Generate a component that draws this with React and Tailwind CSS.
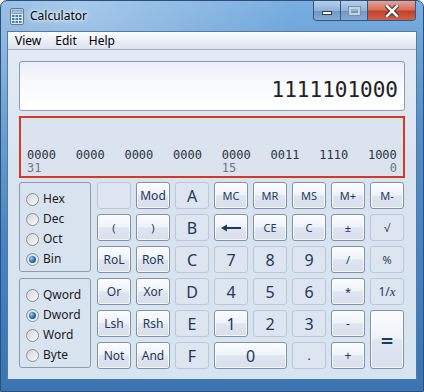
import clsx from "clsx";

const ui = { fontFamily: '"Noto Sans", "Open Sans", Arial, sans-serif' };
const mono = { fontFamily: '"DejaVu Sans Mono", "Liberation Mono", monospace' };

const bits = ["0000", "0000", "0000", "0000", "0000", "0011", "1110", "1000"];

const keys = [
  // row 1
  { t: "", on: false },
  { t: "Mod", on: true, s: "text-[12px]" },
  { t: "A", on: false, s: "text-[16px]" },
  { t: "MC", on: true, s: "text-[11px]" },
  { t: "MR", on: true, s: "text-[11px]" },
  { t: "MS", on: true, s: "text-[11px]" },
  { t: "M+", on: true, s: "text-[11px]" },
  { t: "M-", on: true, s: "text-[11px]" },
  // row 2
  { t: "(", on: true, s: "text-[11px]" },
  { t: ")", on: true, s: "text-[11px]" },
  { t: "B", on: false, s: "text-[16px]" },
  { t: "back", on: true },
  { t: "CE", on: true, s: "text-[11px]" },
  { t: "C", on: true, s: "text-[11px]" },
  { t: "±", on: true, s: "text-[11px]" },
  { t: "√", on: false, s: "text-[11px]" },
  // row 3
  { t: "RoL", on: true, s: "text-[12px]" },
  { t: "RoR", on: true, s: "text-[12px]" },
  { t: "C", on: false, s: "text-[16px]" },
  { t: "7", on: false, s: "text-[16px]" },
  { t: "8", on: false, s: "text-[16px]" },
  { t: "9", on: false, s: "text-[16px]" },
  { t: "/", on: true, s: "text-[11px]" },
  { t: "%", on: false, s: "text-[11px]" },
  // row 4
  { t: "Or", on: true, s: "text-[12px]" },
  { t: "Xor", on: true, s: "text-[12px]" },
  { t: "D", on: false, s: "text-[16px]" },
  { t: "4", on: false, s: "text-[16px]" },
  { t: "5", on: false, s: "text-[16px]" },
  { t: "6", on: false, s: "text-[16px]" },
  { t: "*", on: true, s: "text-[11px]" },
  { t: "inv", on: false, s: "text-[12px]" },
  // row 5
  { t: "Lsh", on: true, s: "text-[12px]" },
  { t: "Rsh", on: true, s: "text-[12px]" },
  { t: "E", on: false, s: "text-[16px]" },
  { t: "1", on: true, s: "text-[16px]" },
  { t: "2", on: false, s: "text-[16px]" },
  { t: "3", on: false, s: "text-[16px]" },
  { t: "-", on: true, s: "text-[12px]" },
  { t: "=", on: true, s: "text-[22px] font-semibold row-span-2" },
  // row 6
  { t: "Not", on: true, s: "text-[12px]" },
  { t: "And", on: true, s: "text-[12px]" },
  { t: "F", on: false, s: "text-[16px]" },
  { t: "0", on: true, s: "text-[16px] col-span-2" },
  { t: ".", on: false, s: "text-[12px]" },
  { t: "+", on: true, s: "text-[12px]" },
];

function Label({ t }) {
  if (t === "back")
    return (
      <svg width="20" height="8" viewBox="0 0 20 8">
        <path d="M0 4 L6 0.5 L6 7.5 Z" fill="#1e395b" />
        <rect x="5" y="3" width="15" height="2" fill="#1e395b" />
      </svg>
    );
  if (t === "inv")
    return (
      <span>
        1/<i style={{ fontFamily: '"Liberation Serif", serif' }} className="text-[13px]">x</i>
      </span>
    );
  return t;
}

function Key({ k }) {
  return (
    <div
      className={clsx(
        "flex items-center justify-center rounded-[3px] border leading-none text-[#1e395b]",
        k.on
          ? "border-[#7f93ad] bg-[linear-gradient(to_bottom,#fbfcfe_0%,#eef2f8_48%,#dfe6f0_52%,#d8e0ec_100%)] shadow-[inset_0_0_0_1px_rgba(255,255,255,0.75)]"
          : "border-[#bcc8d7] bg-[#dce5f0]",
        k.s
      )}
    >
      <Label t={k.t} />
    </div>
  );
}

function Radio({ label, checked }) {
  return (
    <div className="flex items-center h-[20px] gap-[4px] text-[12px] text-[#1b1b1b]">
      <span className="w-[13px] h-[13px] rounded-full border border-[#8c8f95] bg-[linear-gradient(135deg,#d2d4d7,#fbfbfb)] flex items-center justify-center">
        {checked && (
          <span className="w-[7px] h-[7px] rounded-full bg-[radial-gradient(circle_at_35%_35%,#8fd0ff,#1d6ab4_55%,#0f3f75)]" />
        )}
      </span>
      <span>{label}</span>
    </div>
  );
}

function Group({ items, sel }) {
  return (
    <div className="h-[90px] rounded-[3px] border border-[#8d9bb0] pl-[6px] pt-[6px] flex flex-col">
      {items.map((it) => (
        <Radio key={it} label={it} checked={it === sel} />
      ))}
    </div>
  );
}

function CalcIcon() {
  return (
    <svg width="14" height="17" viewBox="0 0 14 17">
      <rect x="0.5" y="0.5" width="13" height="16" rx="1.5" fill="#e8ecf1" stroke="#6b7787" />
      <rect x="2" y="2" width="10" height="3.5" fill="#9cc3e8" stroke="#4e78a3" strokeWidth="0.6" />
      {[0, 1, 2].map((r) =>
        [0, 1, 2].map((c) => (
          <rect key={r + "-" + c} x={2 + c * 3.5} y={7 + r * 3} width="2.6" height="2" fill="#3f7fc4" />
        ))
      )}
    </svg>
  );
}

export default function App() {
  return (
    <div
      style={ui}
      className="w-[424px] h-[392px] flex flex-col overflow-hidden rounded-t-[7px] border border-[#2c5078] bg-[radial-gradient(ellipse_at_18%_0%,rgba(255,255,255,0.35),transparent_45%),linear-gradient(to_bottom,#79aee0,#5690cb_30%,#4481c2_70%,#3a74b1)]"
    >
      {/* title bar */}
      <div className="h-[30px] flex items-start">
        <div className="flex items-center h-[30px] pl-[9px] gap-[6px]">
          <CalcIcon />
          <span className="text-[12px] text-black [text-shadow:0_0_6px_#fff,0_0_3px_#fff]">Calculator</span>
        </div>
        <div className="flex-1" />
        <div className="flex mr-[7px] h-[20px] rounded-b-[4px] border border-t-0 border-[#34567e] overflow-hidden">
          <div className="w-[27px] flex items-center justify-center border-r border-[#34567e] bg-[linear-gradient(to_bottom,#b7d0ea,#8fb2d8_50%,#6f97c4_52%,#86acd6)]">
            <div className="w-[10px] h-[4px] mt-[5px] bg-white border border-[#2c3e52]" />
          </div>
          <div className="w-[27px] flex items-center justify-center border-r border-[#34567e] bg-[linear-gradient(to_bottom,#b7d0ea,#8fb2d8_50%,#6f97c4_52%,#86acd6)]">
            <div className="w-[11px] h-[8px] border-[2px] border-[#c6d2df] outline outline-1 outline-[#7a8ea6]" />
          </div>
          <div className="w-[47px] flex items-center justify-center bg-[linear-gradient(to_bottom,#e8a493,#d7715b_45%,#c2412a_55%,#d0624a)]">
            <svg width="14" height="12" viewBox="0 0 14 12">
              <path d="M2 1 L12 11 M12 1 L2 11" stroke="#3a2a2a" strokeWidth="4.5" strokeLinecap="square" />
              <path d="M2 1 L12 11 M12 1 L2 11" stroke="#fff" strokeWidth="2.5" strokeLinecap="square" />
            </svg>
          </div>
        </div>
      </div>

      {/* client */}
      <div className="flex-1 mx-[6px] mb-[11px] border border-[#55799f] bg-[linear-gradient(to_bottom,#e4ebf5,#d9e3f0_40%,#d9e4f1)] flex flex-col">
        <div className="h-[18px] border-b border-[#a3adbb] bg-[linear-gradient(to_bottom,#ffffff,#eef1f8_40%,#dde3f1)] flex items-center text-[12px] text-black">
          <span className="ml-[7px]">View</span>
          <span className="ml-[14px]">Edit</span>
          <span className="ml-[12px]">Help</span>
        </div>

        <div className="flex flex-col pt-[11px] px-[11px]">
          <div className="h-[50px] rounded-[3px] border border-[#8e9bae] bg-[linear-gradient(to_bottom,#e9eff8,#f7f9fc_40%,#ffffff)] flex items-center justify-end pr-[6px] pt-[10px]">
            <span style={mono} className="text-[21px] text-[#222]">1111101000</span>
          </div>

          <div className="h-[62px] mt-[5px] border-2 border-[#d23a24] bg-[#dae3ee] flex flex-col justify-end pb-[1px] px-[6px]">
            <div style={mono} className="flex justify-between text-[12px] leading-[13px] text-[#2c3440]">
              {bits.map((b, i) => (
                <span key={i} className="w-[29px]">{b}</span>
              ))}
            </div>
            <div style={mono} className="flex justify-between text-[12px] leading-[13px] text-[#6e7886]">
              {["31", "", "", "", "15", "", "", "0"].map((b, i) => (
                <span key={i} className={clsx("w-[29px]", i === 7 && "text-right")}>{b}</span>
              ))}
            </div>
          </div>

          <div className="flex mt-[4px]">
            <div className="w-[72px] flex flex-col gap-[6px]">
              <Group items={["Hex", "Dec", "Oct", "Bin"]} sel="Bin" />
              <Group items={["Qword", "Dword", "Word", "Byte"]} sel="Dword" />
            </div>
            <div className="ml-[6px] grid grid-cols-[repeat(8,34px)] grid-rows-[repeat(6,27px)] gap-[5px]">
              {keys.map((k, i) => (
                <Key key={i} k={k} />
              ))}
            </div>
          </div>
        </div>
      </div>
    </div>
  );
}
